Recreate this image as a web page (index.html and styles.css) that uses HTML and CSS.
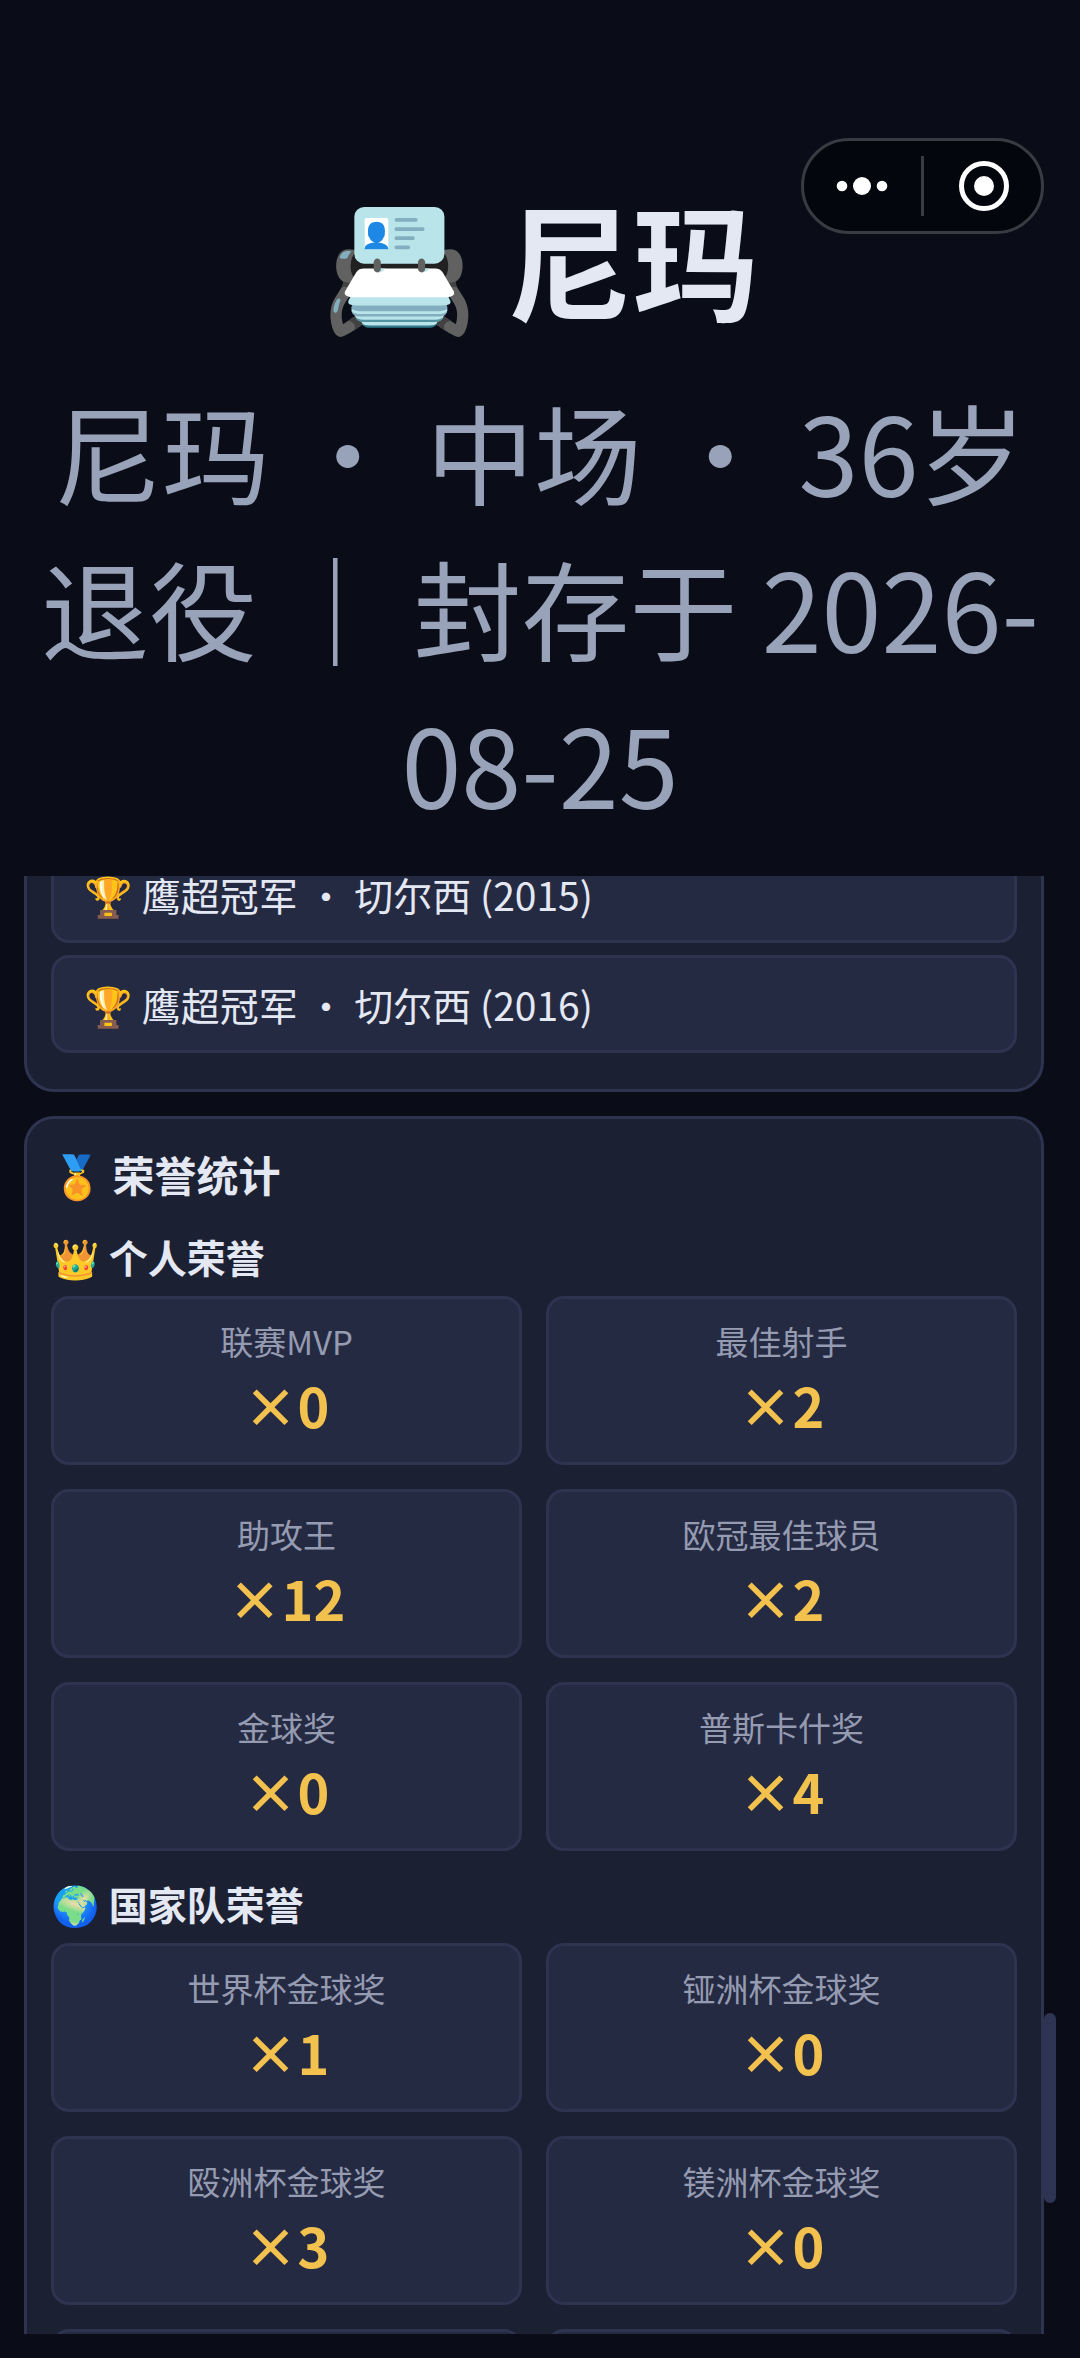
FILE: index.html
```
<!DOCTYPE html>
<html lang="zh-CN">

<head>
	<meta charset="UTF-8">
	<meta name="viewport" content="width=device-width, initial-scale=1">
	<title>尼玛</title>
	<link rel="stylesheet" href="styles.css">
</head>

<body>
	<div class="capsule">
		<button class="capsule-btn" aria-label="更多">
			<svg width="48" height="24" viewBox="0 0 48 24" fill="#fff">
				<circle cx="3" cy="12" r="5.3" />
				<circle cx="23" cy="12" r="9" />
				<circle cx="43" cy="12" r="5.3" />
			</svg>
		</button>
		<span class="capsule-line"></span>
		<button class="capsule-btn" aria-label="关闭">
			<svg width="50" height="50" viewBox="0 0 50 50">
				<circle cx="26" cy="25" r="22.5" fill="none" stroke="#fff" stroke-width="5" />
				<circle cx="26" cy="25" r="10" fill="#fff" />
			</svg>
		</button>
	</div>

	<header class="header">
		<h1>📇 尼玛</h1>
		<p class="subtitle">尼玛 ・ 中场 ・ 36岁 退役 ｜ 封存于 2026-08-25</p>
	</header>

	<main class="content">
		<section class="panel panel-trophies">
			<ul class="trophies">
				<li>🏆 鹰超冠军 ・ 切尔西 (2015)</li>
				<li>🏆 鹰超冠军 ・ 切尔西 (2016)</li>
			</ul>
		</section>

		<section class="panel">
			<h2>🏅 荣誉统计</h2>

			<h3>👑 个人荣誉</h3>
			<div class="grid">
				<div class="card"><span class="label">联赛MVP</span><b class="value">×0</b></div>
				<div class="card"><span class="label">最佳射手</span><b class="value">×2</b></div>
				<div class="card"><span class="label">助攻王</span><b class="value">×12</b></div>
				<div class="card"><span class="label">欧冠最佳球员</span><b class="value">×2</b></div>
				<div class="card"><span class="label">金球奖</span><b class="value">×0</b></div>
				<div class="card"><span class="label">普斯卡什奖</span><b class="value">×4</b></div>
			</div>

			<h3>🌍 国家队荣誉</h3>
			<div class="grid">
				<div class="card"><span class="label">世界杯金球奖</span><b class="value">×1</b></div>
				<div class="card"><span class="label">铔洲杯金球奖</span><b class="value">×0</b></div>
				<div class="card"><span class="label">殴洲杯金球奖</span><b class="value">×3</b></div>
				<div class="card"><span class="label">镁洲杯金球奖</span><b class="value">×0</b></div>
				<div class="card"></div>
				<div class="card"></div>
			</div>
		</section>
	</main>
	<div class="scroll-thumb"></div>
</body>

</html>
```
FILE: styles.css
```
* {
	box-sizing: border-box;
}

body {
	margin: 0;
	padding: 166px 24px 24px;
	height: 100vh;
	display: flex;
	flex-direction: column;
	position: relative;
	overflow: hidden;
	background: #0a0d18;
	color: #e4e8f2;
	font-family: "Noto Sans CJK SC", sans-serif;
}

h1, h2, h3, p, ul {
	margin: 0;
	padding: 0;
}

/* top right capsule */
.capsule {
	position: absolute;
	top: 138px;
	right: 36px;
	width: 243px;
	height: 96px;
	display: flex;
	align-items: center;
	border: 3px solid #393b43;
	border-radius: 48px;
	background: #04060d;
}

.capsule-btn {
	flex: 1;
	display: flex;
	justify-content: center;
	padding: 0;
	border: 0;
	background: none;
}

.capsule-btn svg {
	overflow: visible;
}

.capsule-line {
	width: 3px;
	height: 60px;
	background: #393b43;
}

.header {
	text-align: center;
	padding-bottom: 36px;
}

.header h1 {
	font-size: 126px;
	line-height: 182px;
	margin-bottom: 24px;
}

.subtitle {
	font-size: 108px;
	line-height: 156px;
	color: #98a2b8;
}

.content {
	flex: 1;
	min-height: 0;
	overflow: hidden;
	padding-right: 12px;
}

.panel {
	padding: 24px;
	margin-bottom: 24px;
	border: 3px solid #2e3350;
	border-radius: 30px;
	background: #1c2033;
}

/* scrolled past the top of the list */
.panel-trophies {
	margin-top: -58px;
}

.trophies {
	list-style: none;
}

.trophies li {
	padding: 18px 30px;
	margin-bottom: 12px;
	border: 3px solid #2e3350;
	border-radius: 18px;
	background: #252a43;
	font-size: 39px;
	line-height: 56px;
}

.panel h2 {
	font-size: 42px;
	line-height: 61px;
}

.panel h3 {
	margin: 24px 0 12px;
	font-size: 39px;
	line-height: 56px;
}

.grid {
	display: grid;
	grid-template-columns: 1fr 1fr;
	gap: 24px;
}

.card {
	display: flex;
	flex-direction: column;
	align-items: center;
	min-height: 169px;
	padding: 18px;
	border: 3px solid #2e3350;
	border-radius: 18px;
	background: #252a43;
}

.label {
	font-size: 33px;
	line-height: 49px;
	color: #959bb1;
}

.value {
	font-size: 54px;
	line-height: 78px;
	color: #f2c14e;
}

.scroll-thumb {
	position: absolute;
	right: 24px;
	bottom: 155px;
	width: 12px;
	height: 190px;
	border-radius: 6px;
	background: #2e3454;
}
```
